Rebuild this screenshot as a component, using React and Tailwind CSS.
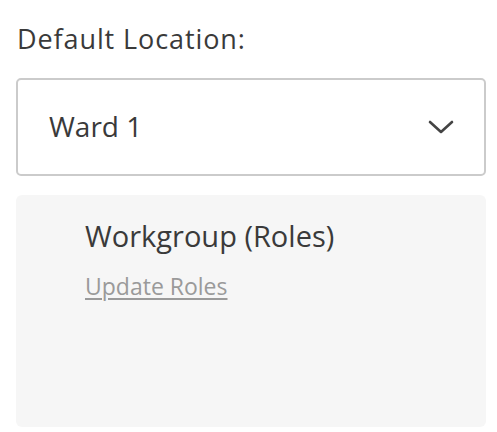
import React from "react";

export default function App() {
  return (
    <div className="w-[497px] h-[432px] bg-white px-4 pt-[21px]" style={{ fontFamily: "'Open Sans', Lato, sans-serif" }}>
      <div className="text-[27px] leading-[36px] tracking-[0.9px] text-[#3a3a3a] pl-px">Default Location:</div>
      <div className="mt-[21px] h-[98px] w-[470px] rounded-[5px] border-2 border-[#cbcbcb] flex items-center justify-between pl-[31px] pr-[30px]">
        <span className="text-[28px] leading-none text-[#3a3a3a] -mt-[3px]">Ward 1</span>
        <svg width="26" height="16" viewBox="0 0 26 16" fill="none">
          <path d="M2 3 L13 13 L24 3" stroke="#444" strokeWidth="2.6" strokeLinecap="round" strokeLinejoin="round" />
        </svg>
      </div>
      <div className="mt-[19px] h-[232px] w-[470px] rounded-[6px] bg-[#f6f6f6] pl-[69px] pt-[23px]">
        <div className="text-[29px] leading-[36px] text-[#3a3a3a]">Workgroup (Roles)</div>
        <a className="mt-[18px] inline-block text-[23px] leading-[28px] text-[#9a9a9a] underline underline-offset-[3px] decoration-2">Update Roles</a>
      </div>
    </div>
  );
}
